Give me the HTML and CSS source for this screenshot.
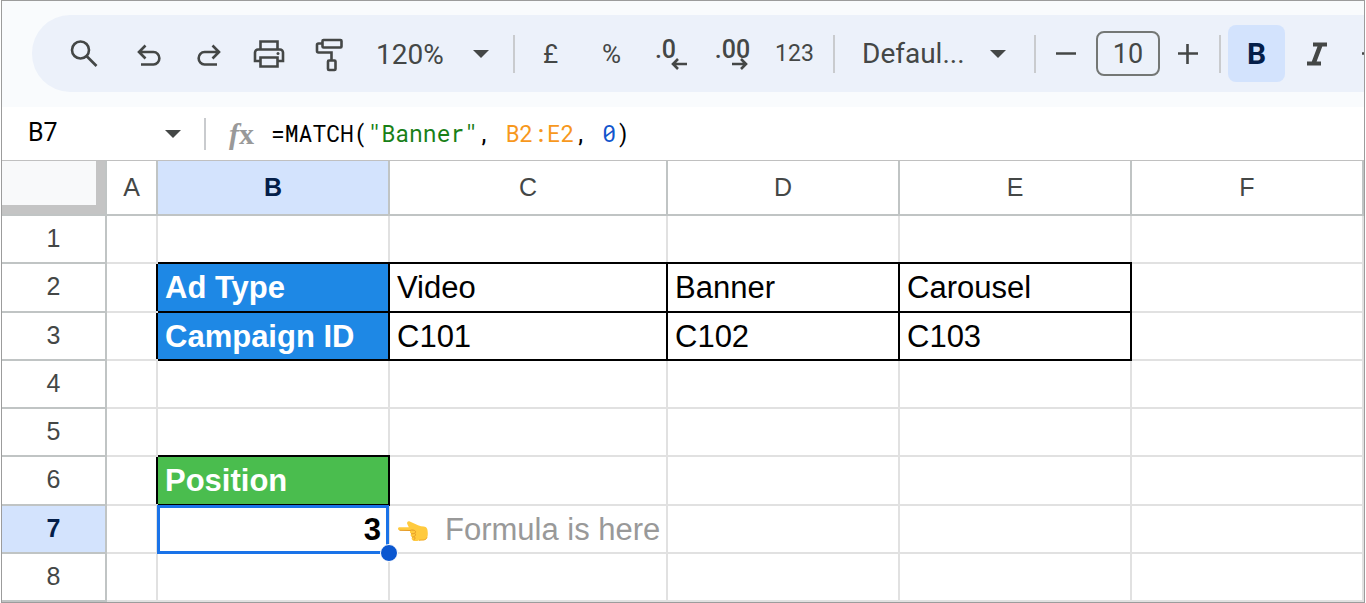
FILE: index.html
```html
<!DOCTYPE html>
<html lang="en">
<head>
<meta charset="utf-8">
<title>Spreadsheet</title>
<link rel="stylesheet" href="styles.css">
</head>
<body>
<main class="app">
  <header class="top">
    <div class="toolbar" role="toolbar" aria-label="Formatting">
      <button class="tool search" aria-label="Search"><svg width="28" height="28" viewBox="0 0 28 28"><g class="line"><circle cx="10.500" cy="10" r="8.500"/><path d="M16.500 16l10 10"/></g></svg></button>
      <button class="tool low" aria-label="Undo"><svg width="24" height="24" viewBox="0 0 24 24"><g class="line"><path d="M2 9h14.500a5.800 6.200 0 0 1 0 12.500H4M8.500 2.500L2 9l6.500 6.500"/></g></svg></button>
      <button class="tool low" aria-label="Redo"><svg width="24" height="24" viewBox="0 0 24 24"><g class="line"><path d="M22 9H7.500a5.800 6.200 0 0 0 0 12.500H20M15.500 2.500L22 9l-6.500 6.500"/></g></svg></button>
      <button class="tool" aria-label="Print"><svg width="32" height="28" viewBox="0 0 32 28"><g class="line"><path d="M7.500 9V1.500h17V9M7.500 21H2V12.500a3 3 0 0 1 3-3h22a3 3 0 0 1 3 3V21h-5.500"/><path d="M7.500 17.500h17v9h-17z"/></g><circle class="solid" cx="25" cy="13.500" r="1.500"/></svg></button>
      <button class="tool paint" aria-label="Paint format"><svg width="28" height="34" viewBox="0 0 28 34"><g class="line"><rect x="7.500" y="2" width="19" height="7.500" rx="1"/><path d="M7.500 5.500H3.500a1.500 1.500 0 0 0-1.500 1.500v6a1.500 1.500 0 0 0 1.500 1.500h13V22"/><rect x="13" y="22.500" width="7.500" height="9.500" rx="1"/></g></svg></button>
      <label class="picker zoom"><select aria-label="Zoom"><option>120%</option></select><svg class="caret" width="16" height="8" viewBox="0 0 16 8"><path class="solid" d="M0 0h16L8 8z"/></svg></label>
      <span class="rule"></span>
      <div class="formats">
        <button class="tool">£</button>
        <button class="tool">%</button>
        <button class="tool" aria-label="Decrease decimal places"><span class="decimal">.0</span><svg class="arrow" width="16" height="12" viewBox="0 0 16 12"><path class="line" d="M16 6H2M7 1L2 6l5 5"/></svg></button>
        <button class="tool" aria-label="Increase decimal places"><span class="decimal wide">.00</span><svg class="arrow" width="16" height="12" viewBox="0 0 16 12"><path class="line" d="M0 6h14M9 1l5 5-5 5"/></svg></button>
        <button class="tool digits">123</button>
      </div>
      <span class="rule"></span>
      <label class="picker family"><select aria-label="Font"><option>Defaul...</option></select><svg class="caret" width="16" height="8" viewBox="0 0 16 8"><path class="solid" d="M0 0h16L8 8z"/></svg></label>
      <span class="rule"></span>
      <button class="tool" aria-label="Decrease font size"><svg width="20" height="20" viewBox="0 0 20 20"><path class="line" d="M0 9.500h20"/></svg></button>
      <input class="size" aria-label="Font size" value="10">
      <button class="tool plus" aria-label="Increase font size"><svg width="20" height="20" viewBox="0 0 20 20"><path class="line" d="M0 9.500h20M9.500 0v20"/></svg></button>
      <span class="rule"></span>
      <button class="tool bold" aria-label="Bold" aria-pressed="true">B</button>
      <button class="tool italic" aria-label="Italic"><svg width="20" height="24" viewBox="0 0 20 24"><path class="solid" d="M6 .5h14v4h-4.700L9.600 19.500H14v4H0v-4h4.800L10.500 4.500H6z"/></svg></button>
      <button class="tool strike" aria-label="Strikethrough"><svg width="24" height="24" viewBox="0 0 24 24"><path class="line" d="M0 11.500h24M18 6c-2-5-12-5-12 1M6 18c2 5 12 5 12-2"/></svg></button>
    </div>
  </header>

  <div class="formula-bar">
    <label class="name-box"><input aria-label="Name box" value="B7"><svg class="caret" width="16" height="8" viewBox="0 0 16 8"><path class="solid" d="M0 0h16L8 8z"/></svg></label>
    <span class="rule"></span>
    <span class="fx"><i>f</i>x</span>
    <div class="formula" role="textbox" aria-label="Formula" contenteditable="true" spellcheck="false">=MATCH(<span class="string">"Banner"</span>, <span class="range">B2:E2</span>, <span class="number">0</span>)</div>
  </div>

  <table class="sheet">
    <colgroup><col class="col-head"><col class="col-a"><col class="col-b"><col class="col-c"><col class="col-b"><col class="col-b"><col></colgroup>
    <thead>
      <tr><th class="corner"></th><th>A</th><th class="active">B</th><th>C</th><th>D</th><th>E</th><th>F</th></tr>
    </thead>
    <tbody>
      <tr><th>1</th><td></td><td class="ink-bottom"></td><td class="ink-bottom"></td><td class="ink-bottom"></td><td class="ink-bottom"></td><td></td></tr>
      <tr><th>2</th><td class="ink-right"></td><td class="ink blue">Ad Type</td><td class="ink">Video</td><td class="ink">Banner</td><td class="ink">Carousel</td><td></td></tr>
      <tr><th>3</th><td class="ink-right"></td><td class="ink blue">Campaign ID</td><td class="ink">C101</td><td class="ink">C102</td><td class="ink">C103</td><td></td></tr>
      <tr><th>4</th><td></td><td></td><td></td><td></td><td></td><td></td></tr>
      <tr><th>5</th><td></td><td class="ink-bottom"></td><td></td><td></td><td></td><td></td></tr>
      <tr><th>6</th><td class="ink-right"></td><td class="ink green">Position</td><td></td><td></td><td></td><td></td></tr>
      <tr><th class="active">7</th><td></td><td class="selected">3<span class="outline"><span class="handle"></span></span></td><td class="note"><svg class="hand" width="32" height="24" viewBox="0 0 32 24" role="img" aria-label="Pointing left"><path fill="#ffca3e" d="M2.500 8.300h9.300L10.500 5.500C9.200 3.500 11 1.600 12.800 2.500L21 6.200c2 .8 4 1.300 5.800 1.400 2.700.2 4 2 4 6.900 0 4-1.300 6.600-4 6.700h-4.500c-3 1.300-6.300 1.200-7.300-.6-.6-1-.4-1.800.2-2.400-1.500-.7-2-2.200-1.100-3.400-1.300-.9-1.500-2.300-.6-3.300L2.500 11.300c-2-.2-2-3 0-3z"/><path fill="none" stroke="#e59a24" stroke-width="1" d="M13 11.500c2-.9 4.500-.5 5.400.7.900 1.500-1 2.700-4.300 2.600M18 14.500c1.500 1.500-.3 3.500-3 3.600M17.500 18c1 1 .3 2.500-1 3M2.500 11.300l10.500.2"/><path fill="none" stroke="#f0a72b" stroke-width="1" d="M22 21.300c3-.7 6.500.6 8-2.800"/></svg>Formula is here</td><td></td><td></td><td></td></tr>
      <tr><th>8</th><td></td><td></td><td></td><td></td><td></td><td></td></tr>
    </tbody>
  </table>
</main>
</body>
</html>
```
FILE: styles.css
```css
* { box-sizing: border-box; }

body {
  margin: 0;
  background: #fff;
  font-family: Roboto, "Liberation Sans", sans-serif;
  color: #444746;
}

.app {
  display: flex;
  flex-direction: column;
  min-height: 100vh;
  margin: 0 1px;
  border: 1px solid #9c9c9c;
  overflow: hidden;
}

button, input, select {
  margin: 0;
  padding: 0;
  border: 0;
  background: none;
  font: inherit;
  color: inherit;
}

.line { fill: none; stroke: #444746; stroke-width: 2.600; }
.solid { fill: #444746; }

.top {
  padding: 14px 0 15px 30px;
  background: #f9fbfd;
}

.toolbar {
  display: flex;
  align-items: center;
  height: 77px;
  padding-left: 22px;
  border-radius: 38px 0 0 38px;
  background: #ecf1fa;
  overflow: hidden;
}

.toolbar > * { flex: none; }

.tool {
  display: flex;
  align-items: center;
  justify-content: center;
  width: 60px;
  height: 57px;
  font-size: 26px;
}

.search { margin-right: 5px; }
.low { padding-top: 3px; }
.paint { padding-top: 3px; }

.rule { width: 2px; height: 38px; background: #c9cbce; }

.picker, .name-box { display: grid; align-items: center; }
.picker > *, .name-box > * { grid-area: 1 / 1; }
.picker select { width: 100%; appearance: none; font-size: 28px; outline: none; }
.caret { justify-self: end; pointer-events: none; }

.zoom { width: 154px; padding: 0 24px 0 17px; }
.zoom select { padding-top: 2px; }
.family { width: 199px; padding: 0 28px 0 27px; }

.formats { display: flex; margin: 0 8px 0 5px; }
.formats .tool { position: relative; width: 61px; }
.formats .digits { font-size: 23px; }
.decimal { padding: 0 14px 8px 0; font-size: 25px; font-weight: 500; }
.decimal.wide { padding-right: 2px; }
.arrow { position: absolute; right: 16px; bottom: 12px; }

.size {
  width: 64px;
  height: 45px;
  border: 2px solid #747775;
  border-radius: 8px;
  font-size: 27px;
  text-align: center;
}

.plus { width: 55px; margin-right: 4px; }

.bold {
  width: 57px;
  margin-left: 7px;
  border-radius: 8px;
  background: #d3e3fd;
  color: #041e49;
  font-size: 30px;
  font-weight: 700;
}

.italic { width: 64px; }
.strike { justify-content: flex-end; width: 37px; }

.formula-bar {
  display: flex;
  align-items: center;
  height: 54px;
  border-bottom: 1px solid #c0c0c0;
}

.formula-bar .rule { height: 32px; }

.name-box { width: 202px; padding: 0 23px 0 26px; }
.name-box input { width: 100%; padding-bottom: 2px; font-size: 25px; color: #000; outline: none; }

.fx {
  width: 65px;
  padding-left: 23px;
  font: bold 30px/40px "Liberation Serif", serif;
  color: #999;
}

.formula {
  flex: 1;
  padding-bottom: 2px;
  font: 23px/40px "Roboto Mono", "DejaVu Sans Mono", monospace;
  color: #000;
  white-space: pre;
}

.string { color: #188017; }
.range { color: #f7981d; }
.number { color: #1155cc; }

.sheet {
  flex: 1;
  width: 100%;
  table-layout: fixed;
  border-collapse: collapse;
  font-family: "Liberation Sans", Arial, sans-serif;
}

.col-head { width: 104px; }
.col-a { width: 51px; }
.col-b { width: 232px; }
.col-c { width: 278px; }

.sheet th {
  padding: 0 0 2px;
  border: solid #c0c4c4;
  border-width: 0 2px 2px 0;
  font-size: 25px;
  font-weight: 400;
  line-height: 44px;
}

.sheet thead th { height: 54px; }
.sheet th.active { background: #d3e3fd; color: #041e49; font-weight: 700; }

.sheet th.corner {
  background: #f8f9fa;
  box-shadow: inset -9px -9px #c4c4c4;
}

.sheet td {
  padding: 2px 7px 0;
  border: solid #e1e1e1;
  border-width: 0 2px 2px 0;
  font-size: 31px;
  line-height: 44px;
  color: #000;
  white-space: nowrap;
}

.sheet .ink { border-color: #000; }
.sheet .ink-bottom { border-bottom-color: #000; }
.sheet .ink-right { border-right-color: #000; }
.sheet .blue { background: #1e88e5; color: #fff; font-weight: 700; }
.sheet .green { background: #4abd4e; color: #fff; font-weight: 700; }

.sheet .selected { position: relative; text-align: right; font-weight: 700; }

.outline {
  position: absolute;
  inset: -1px -1px -2px;
  border: 3px solid #1a73e8;
}

.handle {
  position: absolute;
  right: -12px;
  bottom: -11px;
  width: 18px;
  height: 18px;
  border: 1px solid #fff;
  border-radius: 50%;
  background: #0b57d0;
}

.sheet .note { color: #999; }
.hand { margin-right: 16px; vertical-align: -3px; }
```
